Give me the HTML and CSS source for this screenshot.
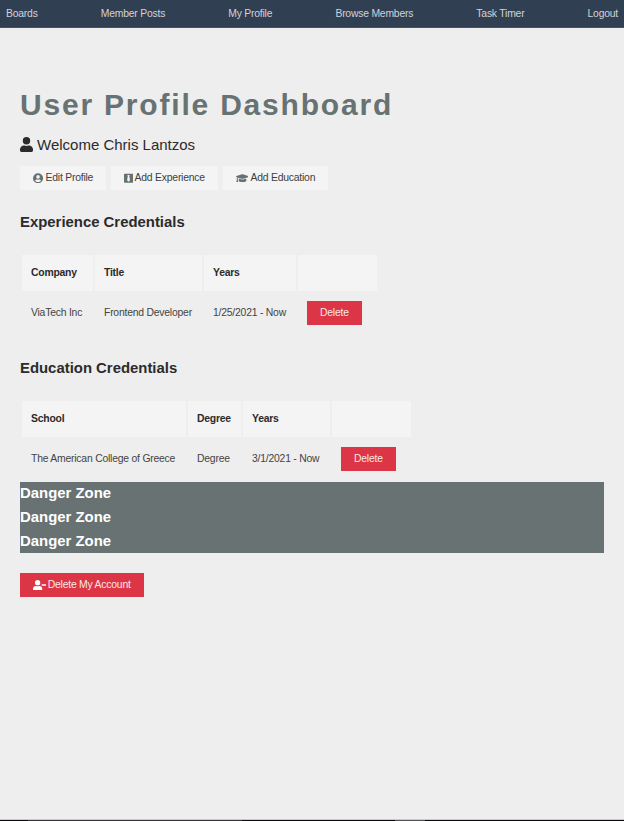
FILE: index.html
```html
<!DOCTYPE html>
<html lang="en">
<head>
<meta charset="utf-8">
<title>User Profile Dashboard</title>
<link rel="stylesheet" href="styles.css">
</head>
<body>
<nav class="navbar">
  <a>Boards</a><a>Member Posts</a><a>My Profile</a><a>Browse Members</a><a>Task Timer</a><a>Logout</a>
</nav>
<main class="container">
  <h1>User Profile Dashboard</h1>
  <p class="lead"><svg class="icon-user" viewBox="0 0 448 512"><path d="M224 256a128 128 0 1 0 0-256 128 128 0 0 0 0 256zm90 32h-17a174 174 0 0 1-146 0h-17C60 288 0 348 0 422v42c0 27 21 48 48 48h352c27 0 48-21 48-48v-42c0-74-60-134-134-134z"/></svg><span>Welcome Chris Lantzos</span></p>
  <div class="actions">
    <a class="btn edit"><svg viewBox="0 0 496 512"><path fill-rule="evenodd" d="M248 8a248 248 0 1 0 0 496 248 248 0 0 0 0-496zm0 96a88 88 0 1 1 0 176 88 88 0 0 1 0-176zm0 344c-59 0-111-27-146-68 19-35 56-60 98-60 15 0 20 8 48 8s33-8 48-8c43 0 79 25 98 60-35 41-87 68-146 68z"/></svg><span>Edit Profile</span></a>
    <a class="btn experience"><svg viewBox="0 0 448 512"><path fill-rule="evenodd" d="M32 32h384q32 0 32 32v384q0 32-32 32H32q-32 0-32-32V64q0-32 32-32zM160 96l30 56-38 200 72 80 72-80-38-200 30-56z"/></svg><span>Add Experience</span></a>
    <a class="btn education"><svg viewBox="0 0 640 512"><path d="M622 153 343 67q-23-7-46 0L18 153c-24 8-24 39 0 47l49 15c-11 13-17 29-18 46a32 32 0 0 0-3 53L20 428c-2 10 6 20 16 20h56c10 0 18-10 16-20L82 314a32 32 0 0 0-2-52c1-14 8-26 20-34l188 58q32 10 64 0l270-86c24-8 24-39 0-47zM353 315q-33 11-66 0l-145-45-14 114c0 35 86 64 192 64s192-29 192-64l-14-114z"/></svg><span>Add Education</span></a>
  </div>
  <h2>Experience Credentials</h2>
  <table class="experience-table">
    <colgroup><col class="c-company"><col class="c-title"><col class="c-dates"><col class="c-action"></colgroup>
    <thead><tr><th>Company</th><th>Title</th><th>Years</th><th></th></tr></thead>
    <tbody><tr><td>ViaTech Inc</td><td>Frontend Developer</td><td>1/25/2021 - Now</td><td><button class="btn danger">Delete</button></td></tr></tbody>
  </table>
  <h2 class="second">Education Credentials</h2>
  <table class="education-table">
    <colgroup><col class="c-school"><col class="c-degree"><col class="c-years"><col class="c-action"></colgroup>
    <thead><tr><th>School</th><th>Degree</th><th>Years</th><th></th></tr></thead>
    <tbody><tr><td>The American College of Greece</td><td>Degree</td><td>3/1/2021 - Now</td><td><button class="btn danger">Delete</button></td></tr></tbody>
  </table>
  <section class="zone"><h2>Danger Zone</h2><h2>Danger Zone</h2><h2>Danger Zone</h2></section>
  <button class="btn danger account"><svg viewBox="0 0 640 512"><path d="M224 256a128 128 0 1 0 0-256 128 128 0 0 0 0 256zm90 32h-17a174 174 0 0 1-146 0h-17C60 288 0 348 0 422v42c0 27 21 48 48 48h352c27 0 48-21 48-48v-42c0-74-60-134-134-134zM432 208h192q16 0 16 16v32q0 16-16 16H432q-16 0-16-16v-32q0-16 16-16z"/></svg><span>Delete My Account</span></button>
</main>
<footer class="edge"></footer>
</body>
</html>
```
FILE: styles.css
```css
* { box-sizing: border-box; margin: 0; padding: 0; }
body {
  display: flex;
  flex-direction: column;
  height: 821px;
  overflow: hidden;
  background: #eee;
  color: #2b2b2b;
  font: 10.4px/16px "Liberation Sans", Arial, sans-serif;
  letter-spacing: -0.22px;
}
.navbar {
  display: flex;
  flex: none;
  justify-content: space-between;
  align-items: center;
  height: 28px;
  padding: 1px 6px 0;
  background: #303f52;
  border-bottom: 1px solid #465364;
  color: #d0d3d8;
}
.container { flex: 1; padding: 58px 20px 0; }
h1 {
  height: 38px;
  color: #677272;
  font-size: 30px;
  line-height: 37px;
  letter-spacing: 1.8px;
  white-space: nowrap;
}
.lead {
  display: flex;
  align-items: center;
  gap: 4px;
  height: 20px;
  margin-top: 11px;
  font-size: 15px;
  line-height: 20px;
  letter-spacing: 0;
}
svg { flex: none; fill: currentColor; }
.icon-user { width: 13px; height: 15px; margin-bottom: 2px; }
.actions { display: flex; gap: 5px; margin-top: 11px; }
.btn {
  display: inline-flex;
  align-items: center;
  gap: 2px;
  height: 24px;
  padding: 0 12.5px;
  border: 0;
  background: #f4f4f4;
  color: #3b3f3f;
  font: inherit;
  letter-spacing: inherit;
  white-space: nowrap;
}
.btn svg { color: #667171; height: 10.4px; }
.edit { width: 86px; gap: 3px; }
.experience { width: 107px; }
.education { width: 105px; }
h2 { font-size: 14.9px; line-height: 24px; letter-spacing: 0; }
.container > h2 { margin-top: 20px; }
table { table-layout: fixed; border-spacing: 2px; margin-top: 19px; }
th, td { padding: 0 9px; text-align: left; white-space: nowrap; }
th { height: 36px; background: #f4f4f4; }
td { height: 39px; color: #444; }
td .btn { display: flex; }
.experience-table { width: 359px; }
.education-table { width: 393px; margin-bottom: 2px; }
.c-company { width: 71px; }
.c-title { width: 107px; }
.c-dates { width: 92px; }
.c-school { width: 164px; }
.c-degree { width: 53px; }
.c-years { width: 87px; }
.btn.danger { background: #dc3545; color: #f8e8ea; }
td .btn.danger { width: 55px; padding-left: 13px; }
.container > .second { margin-top: 22px; }
.zone { height: 71px; background: #697273; color: #fff; }
.zone h2 { line-height: 23.9px; }
.btn.account { width: 124px; margin-top: 20px; }
.btn.danger svg { height: 10.6px; color: #fff; }
.edge {
  flex: none;
  height: 2px;
  border-top: 1px solid #c9c9c9;
  background: linear-gradient(90deg, #0d0a0e 28px, #393639 28px 242px, #0d0a0e 242px 395px, #555155 395px 425px, #0d0a0e 425px);
}
```
